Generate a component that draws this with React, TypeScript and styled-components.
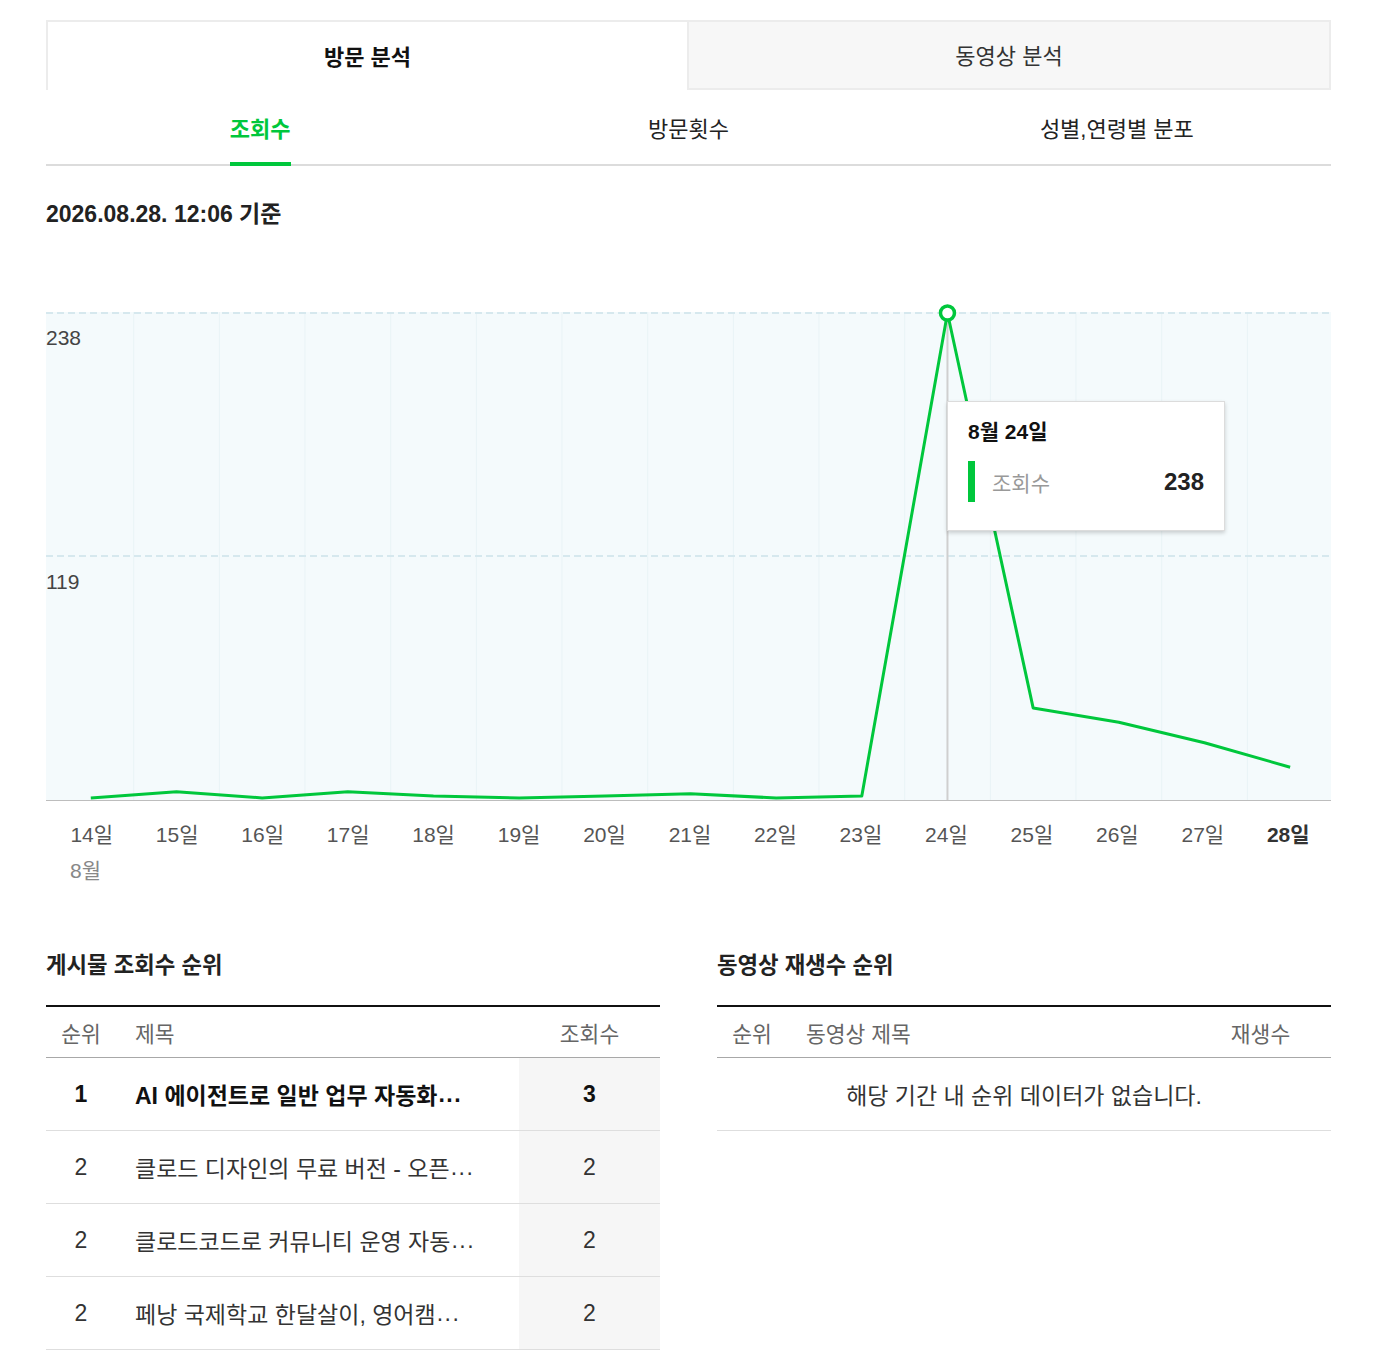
import React from "react"
import styled, { createGlobalStyle } from "styled-components"

const GREEN = "#00c73c"
const FONT = `"Liberation Sans", "Noto Sans CJK KR", sans-serif`

const GlobalStyle = createGlobalStyle`
  body {
    margin: 0;
    background: #fff;
    font-family: ${FONT};
    color: #222;
  }
  * {
    box-sizing: border-box;
  }
`

const Page = styled.div`
  width: 1285px;
  margin: 20px 0 0 46px;
`

const TopTabs = styled.div`
  display: grid;
  grid-template-columns: 641px 1fr;
  height: 70px;
`

const TopTab = styled.div<{ $active?: boolean }>`
  display: flex;
  align-items: center;
  justify-content: center;
  padding-bottom: 3px;
  font-size: 22px;
  font-weight: ${p => (p.$active ? 700 : 400)};
  color: ${p => (p.$active ? "#111" : "#333")};
  background: ${p => (p.$active ? "#fff" : "#f7f7f7")};
  border: 2px solid #ececec;
  border-bottom: ${p => (p.$active ? "none" : "2px solid #ececec")};
  border-right: ${p => (p.$active ? "none" : "2px solid #ececec")};
`

const SubTabs = styled.div`
  display: grid;
  grid-template-columns: repeat(3, 1fr);
  height: 76px;
  border-bottom: 2px solid #dcdcdc;
`

const SubTab = styled.div`
  display: flex;
  justify-content: center;
`

const SubTabLabel = styled.span<{ $active?: boolean }>`
  display: flex;
  align-items: center;
  padding-top: 2px;
  margin-bottom: -2px;
  font-size: 22px;
  font-weight: ${p => (p.$active ? 700 : 400)};
  color: ${p => (p.$active ? GREEN : "#222")};
  border-bottom: 4px solid ${p => (p.$active ? GREEN : "transparent")};
`

const DateLine = styled.div`
  margin-top: 33px;
  font-size: 23px;
  line-height: 30px;
  font-weight: 700;
  color: #222;
`

const ChartArea = styled.div`
  position: relative;
  margin-top: 83px;
  height: 489px;
  svg {
    display: block;
    overflow: visible;
  }
`

const YLabel = styled.span<{ $top: number }>`
  position: absolute;
  left: 0;
  top: ${p => p.$top}px;
  font-size: 21px;
  line-height: 24px;
  color: #444;
`

const Tooltip = styled.div`
  position: absolute;
  left: 901px;
  top: 89px;
  width: 278px;
  height: 130px;
  background: #fff;
  border: 1px solid #dcdcdc;
  box-shadow: 0 2px 4px rgba(0, 0, 0, 0.18);
  padding: 17px 20px 0 20px;
`

const TooltipTitle = styled.div`
  font-size: 21px;
  line-height: 26px;
  font-weight: 700;
  color: #111;
`

const TooltipRow = styled.div`
  display: flex;
  align-items: center;
  margin-top: 16px;
  height: 41px;
`

const TooltipSwatch = styled.span`
  width: 7px;
  height: 41px;
  background: ${GREEN};
  margin-right: 17px;
`

const TooltipName = styled.span`
  flex: 1;
  font-size: 21px;
  color: #999;
`

const TooltipValue = styled.span`
  font-size: 24px;
  font-weight: 700;
  color: #222;
`

const XLabels = styled.div`
  display: grid;
  grid-template-columns: repeat(15, 1fr);
  margin-top: 21px;
  padding-left: 3px;
`

const XLabel = styled.span<{ $bold?: boolean }>`
  text-align: center;
  font-size: 21px;
  line-height: 26px;
  font-weight: ${p => (p.$bold ? 700 : 400)};
  color: ${p => (p.$bold ? "#333" : "#555")};
`

const MonthLabel = styled.div`
  margin-top: 10px;
  padding-left: 24px;
  font-size: 21px;
  line-height: 26px;
  color: #888;
`

const Rankings = styled.div`
  display: grid;
  grid-template-columns: 614px 614px;
  column-gap: 57px;
  margin-top: 68px;
`

const SectionTitle = styled.h3`
  margin: 0;
  font-size: 22.3px;
  line-height: 28px;
  font-weight: 700;
  color: #222;
`

const Table = styled.div`
  margin-top: 25px;
  border-top: 2px solid #111;
`

const HeadRow = styled.div`
  display: grid;
  grid-template-columns: 70px 1fr 141px;
  height: 51px;
  border-bottom: 1px solid #a8a8a8;
  font-size: 21.5px;
  color: #666;
`

const Row = styled.div<{ $bold?: boolean }>`
  display: grid;
  grid-template-columns: 70px 1fr 141px;
  height: 73px;
  border-bottom: 1px solid #dedede;
  font-size: 23px;
  font-weight: ${p => (p.$bold ? 700 : 400)};
  color: ${p => (p.$bold ? "#111" : "#333")};
`

const Cell = styled.div<{ $align?: "left" | "center"; $shade?: boolean }>`
  display: flex;
  align-items: center;
  justify-content: ${p => (p.$align === "left" ? "flex-start" : "center")};
  padding-left: ${p => (p.$align === "left" ? "19px" : "0")};
  background: ${p => (p.$shade ? "#f6f6f6" : "transparent")};
  white-space: nowrap;
  overflow: hidden;
`

const Ellipsis = styled.span`
  letter-spacing: 1.5px;
  margin-left: 1px;
`

const EmptyRow = styled.div`
  display: flex;
  align-items: center;
  justify-content: center;
  height: 73px;
  border-bottom: 1px solid #dedede;
  font-size: 23px;
  color: #333;
`

const views = [1, 4, 1, 4, 2, 1, 2, 3, 1, 2, 238, 45, 38, 28, 16]
const days = [14, 15, 16, 17, 18, 19, 20, 21, 22, 23, 24, 25, 26, 27, 28]
const W = 1285
const H = 488
const COL = W / 15

const posts = [
  { rank: 1, title: "AI 에이전트로 일반 업무 자동화", count: 3 },
  { rank: 2, title: "클로드 디자인의 무료 버전 - 오픈", count: 2 },
  { rank: 2, title: "클로드코드로 커뮤니티 운영 자동", count: 2 },
  { rank: 2, title: "페낭 국제학교 한달살이, 영어캠", count: 2 },
]

const ViewChart = () => {
  const pts = views.map((v, i) => {
    const x = 44.8 + i * COL
    const y = H - (v * (H - 1)) / 238
    return [x, y]
  })
  const peak = pts[10]
  return (
    <svg width={W} height={H + 1} viewBox={`0 0 ${W} ${H + 1}`}>
      <rect x={0} y={0} width={W} height={H} fill="#f4fafc" />
      {days.slice(1).map((_, i) => (
        <line
          key={i}
          x1={(i + 1) * COL + 2}
          x2={(i + 1) * COL + 2}
          y1={0}
          y2={H}
          stroke="#e9f3f6"
          strokeWidth={1}
        />
      ))}
      <line x1={0} x2={W} y1={1} y2={1} stroke="#d6e8ee" strokeWidth={2} strokeDasharray="7 4" />
      <line x1={0} x2={W} y1={244} y2={244} stroke="#d6e8ee" strokeWidth={2} strokeDasharray="7 4" />
      <line x1={0} x2={W} y1={H + 0.5} y2={H + 0.5} stroke="#bdbdbd" strokeWidth={1} />
      <line x1={peak[0]} x2={peak[0]} y1={0} y2={H} stroke="#cfcfcf" strokeWidth={2} />
      <polyline
        points={pts.map(p => p.join(",")).join(" ")}
        fill="none"
        stroke={GREEN}
        strokeWidth={3}
        strokeLinejoin="round"
      />
      <circle cx={peak[0]} cy={peak[1]} r={7} fill="#fff" stroke={GREEN} strokeWidth={3.5} />
    </svg>
  )
}

const App = () => {
  return (
    <Page>
      <GlobalStyle />
      <TopTabs>
        <TopTab $active>방문 분석</TopTab>
        <TopTab>동영상 분석</TopTab>
      </TopTabs>
      <SubTabs>
        <SubTab>
          <SubTabLabel $active>조회수</SubTabLabel>
        </SubTab>
        <SubTab>
          <SubTabLabel>방문횟수</SubTabLabel>
        </SubTab>
        <SubTab>
          <SubTabLabel>성별,연령별 분포</SubTabLabel>
        </SubTab>
      </SubTabs>

      <DateLine>2026.08.28. 12:06 기준</DateLine>

      <ChartArea>
        <ViewChart />
        <YLabel $top={14}>238</YLabel>
        <YLabel $top={258}>119</YLabel>
        <Tooltip>
          <TooltipTitle>8월 24일</TooltipTitle>
          <TooltipRow>
            <TooltipSwatch />
            <TooltipName>조회수</TooltipName>
            <TooltipValue>238</TooltipValue>
          </TooltipRow>
        </Tooltip>
      </ChartArea>
      <XLabels>
        {days.map(d => (
          <XLabel key={d} $bold={d === 28}>
            {d}일
          </XLabel>
        ))}
      </XLabels>
      <MonthLabel>8월</MonthLabel>

      <Rankings>
        <div>
          <SectionTitle>게시물 조회수 순위</SectionTitle>
          <Table>
            <HeadRow>
              <Cell>순위</Cell>
              <Cell $align="left">제목</Cell>
              <Cell>조회수</Cell>
            </HeadRow>
            {posts.map((p, i) => (
              <Row key={i} $bold={i === 0}>
                <Cell>{p.rank}</Cell>
                <Cell $align="left">
                  {p.title}
                  <Ellipsis>...</Ellipsis>
                </Cell>
                <Cell $shade>{p.count}</Cell>
              </Row>
            ))}
          </Table>
        </div>
        <div>
          <SectionTitle>동영상 재생수 순위</SectionTitle>
          <Table>
            <HeadRow>
              <Cell>순위</Cell>
              <Cell $align="left">동영상 제목</Cell>
              <Cell>재생수</Cell>
            </HeadRow>
            <EmptyRow>해당 기간 내 순위 데이터가 없습니다.</EmptyRow>
          </Table>
        </div>
      </Rankings>
    </Page>
  )
}

export default App
